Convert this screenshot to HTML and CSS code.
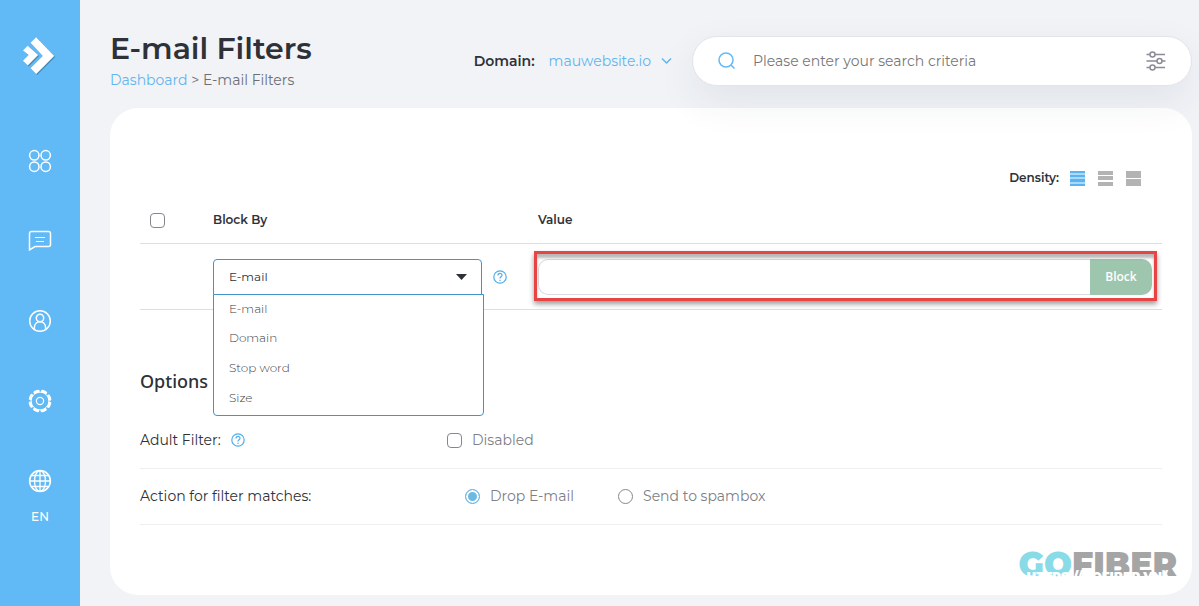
FILE: index.html
```html
<!DOCTYPE html>
<html lang="en">
<head>
<meta charset="utf-8">
<title>E-mail Filters</title>
<link rel="stylesheet" href="styles.css">
</head>
<body>
<nav class="sidebar" aria-label="Main">
  <a class="logo" href="#" aria-label="Home">
    <svg width="34" height="42" viewBox="0 0 36 42"><g class="logo-shade"><path d="M1 15l5-5 11 10-11 11-5-5 6-6z"/><path d="M9 7l6-6 19 20-19 19-6-6 13-13z"/></g><path d="M0 14l5-5 11 10L5 30l-5-5 6-6z" fill="#fff"/><path d="M8 6l6-6 19 20-19 19-6-6 13-13z" fill="#fff"/></svg>
  </a>
  <a class="nav-item" href="#" aria-label="Apps">
    <svg class="nav-icon" viewBox="0 0 24 24"><circle cx="6.3" cy="6.3" r="4.7"/><circle cx="17.7" cy="6.3" r="4.7"/><circle cx="6.3" cy="17.7" r="4.7"/><circle cx="17.7" cy="17.7" r="4.7"/></svg>
  </a>
  <a class="nav-item" href="#" aria-label="Messages">
    <svg class="nav-icon" viewBox="0 0 24 24"><path d="M3.500 2.500h17a2 2 0 0 1 2 2v11a2 2 0 0 1-2 2H7l-5.500 3.500V4.500a2 2 0 0 1 2-2z"/><path d="M7 8.500h10M8 12.500h8" stroke-width="1.200"/></svg>
  </a>
  <a class="nav-item" href="#" aria-label="Account">
    <svg class="nav-icon" viewBox="0 0 24 24"><circle cx="12" cy="12" r="10.300"/><circle cx="12" cy="9" r="3.700"/><path d="M6.300 20.500v-1.500c0-8.500 11.400-8.500 11.400 0v1.500"/></svg>
  </a>
  <a class="nav-item" href="#" aria-label="Settings">
    <svg class="nav-icon" viewBox="0 0 24 24"><circle cx="12" cy="12" r="10" stroke-width="3" stroke-linecap="round" stroke-dasharray="3.500 4.354" stroke-dashoffset="-2.200"/><circle cx="12" cy="12" r="8.900" stroke-width="1"/><circle cx="12" cy="12" r="3.600" stroke-width="1.200"/></svg>
  </a>
  <a class="nav-item nav-lang" href="#">
    <svg class="nav-icon" viewBox="0 0 24 24"><circle cx="12" cy="12" r="10.400"/><ellipse cx="12" cy="12" rx="5.500" ry="10.400" stroke-width="1.300"/><path d="M12 1.600v20.800M1.600 12h20.800M3.500 6.500h17M3.500 17.500h17" stroke-width="1.300"/></svg>
    <span>EN</span>
  </a>
</nav>

<main class="main">
  <header class="header">
    <div class="heading">
      <h1>E-mail Filters</h1>
      <div class="breadcrumb"><a href="#">Dashboard</a> &gt; E-mail Filters</div>
    </div>
    <div class="domain">
      <strong>Domain:</strong>
      <button type="button" class="domain-button">mauwebsite.io
        <svg width="11" height="8" viewBox="0 0 11 8"><path d="M1 1.500l4.500 4.500L10 1.500"/></svg>
      </button>
    </div>
    <form class="search">
      <svg width="18" height="18" viewBox="0 0 18 18" class="search-icon"><circle cx="8" cy="8" r="7"/><path d="M13 13l3.500 3.500"/></svg>
      <input type="text" aria-label="Search" placeholder="Please enter your search criteria">
      <button type="button" class="search-options" aria-label="Search options">
        <svg width="20" height="20" viewBox="0 0 20 20"><path d="M.5 3.500H4M9 3.500h10M.5 10h10.500M16 10h3.500M.5 16.500H4M9 16.500h10"/><circle cx="6.500" cy="3.500" r="2.500"/><circle cx="13.500" cy="10" r="2.500"/><circle cx="6.500" cy="16.500" r="2.500"/></svg>
      </button>
    </form>
  </header>

  <section class="card">
    <div class="density">
      <span>Density:</span>
      <button type="button" class="density-button" aria-label="Compact"><svg width="15" height="15" viewBox="0 0 15 15"><path fill="#a9dafb" d="M0 0h15v15H0z"/><path fill="#5db3f0" d="M0 0h15v2H0zM0 4h15v2H0zM0 8h15v3H0zM0 13h15v2H0z"/></svg></button>
      <button type="button" class="density-button" aria-label="Normal"><svg width="15" height="15" viewBox="0 0 15 15"><path fill="#b3b3b3" d="M0 0h15v4H0zM0 5h15v4H0zM0 11h15v4H0z"/></svg></button>
      <button type="button" class="density-button" aria-label="Relaxed"><svg width="15" height="15" viewBox="0 0 15 15"><path fill="#b3b3b3" d="M0 0h15v7H0zM0 8h15v7H0z"/></svg></button>
    </div>

    <table class="filters">
      <colgroup><col class="col-check"><col class="col-type"><col></colgroup>
      <thead>
        <tr>
          <th><input type="checkbox" class="tick tick-all" aria-label="Select all"></th>
          <th>Block By</th>
          <th>Value</th>
        </tr>
      </thead>
      <tbody>
        <tr>
          <td></td>
          <td>
            <div class="type-field">
              <div class="dropdown">
                <select class="select" aria-label="Block by">
                  <option>E-mail</option><option>Domain</option><option>Stop word</option><option>Size</option>
                </select>
                <svg class="caret" width="11" height="6" viewBox="0 0 11 6"><path d="M0 0h11L5.500 6z"/></svg>
                <ul class="menu">
                  <li>E-mail</li>
                  <li>Domain</li>
                  <li>Stop word</li>
                  <li>Size</li>
                </ul>
              </div>
              <svg class="help" viewBox="0 0 14 14"><circle cx="7" cy="7" r="6.200"/><path d="M5 5.500c0-2.700 4-2.700 4-.2C9 6.800 7 6.800 7 8.500M7 9.800v1.200"/></svg>
            </div>
          </td>
          <td>
            <div class="value-field">
              <input type="text" aria-label="Value">
              <button type="button">Block</button>
            </div>
          </td>
        </tr>
      </tbody>
    </table>

    <h2>Options</h2>
    <div class="option">
      <div class="option-name">Adult Filter:
        <svg class="help" viewBox="0 0 14 14"><circle cx="7" cy="7" r="6.200"/><path d="M5 5.500c0-2.700 4-2.700 4-.2C9 6.800 7 6.800 7 8.500M7 9.800v1.200"/></svg>
      </div>
      <label class="choice"><input type="checkbox" class="tick">Disabled</label>
    </div>
    <div class="option" role="radiogroup" aria-labelledby="action-name">
      <div class="option-name" id="action-name">Action for filter matches:</div>
      <div class="radios">
        <label class="choice"><input type="radio" class="tick radio" name="action" checked>Drop E-mail</label>
        <label class="choice"><input type="radio" class="tick radio" name="action">Send to spambox</label>
      </div>
    </div>

    <div class="watermark">
      <div class="brand"><span>GO</span>FIBER</div>
      <div class="brand-url">HTTPS://GOFIBER.VN/</div>
    </div>
  </section>
</main>
</body>
</html>
```
FILE: styles.css
```css
* { box-sizing: border-box; }

body {
  margin: 0;
  min-height: 100vh;
  display: flex;
  background: #f1f3f7;
  color: #2e3138;
  font: 14px/20px Montserrat, Inter, sans-serif;
}

button, input, select { font: inherit; color: inherit; }
button { border: 0; padding: 0; background: none; cursor: pointer; }
a { color: #62b5ee; text-decoration: none; }
svg { display: block; flex: none; }

/* Sidebar */
.sidebar {
  flex: 0 0 80px;
  display: flex;
  flex-direction: column;
  align-items: center;
  gap: 56px;
  padding-top: 36px;
  background: #61b9f5;
}
.logo { margin-bottom: 15px; }
.logo-shade { fill: #000; opacity: .25; }
.nav-item { color: #fff; }
.nav-icon { width: 24px; height: 24px; fill: none; stroke: #fff; stroke-width: 1.5; }
.nav-lang {
  display: flex;
  flex-direction: column;
  align-items: center;
  gap: 14px;
  font-size: 12px;
  font-weight: 500;
}

/* Header */
.main { flex: 1; min-width: 0; padding: 32px 7px 12px 30px; }
.header {
  position: relative;
  z-index: 1;
  display: flex;
  align-items: center;
  margin-bottom: 18px;
}
.heading { flex: 1; }
h1 { margin: 0 0 4px; font-size: 30px; line-height: 34px; font-weight: 600; }
.breadcrumb { color: #6b6e76; }
.domain { display: flex; gap: 14px; margin-right: 20px; }
.domain strong { font-weight: 600; }
.domain-button { display: flex; align-items: center; gap: 10px; color: #62b5ee; }
.domain-button svg { fill: none; stroke: #62b5ee; stroke-width: 1.5; }
.search {
  flex: 0 1 500px;
  display: flex;
  align-items: center;
  gap: 17px;
  height: 50px;
  padding: 0 25px;
  border: 1px solid #e2e4e9;
  border-radius: 25px;
  background: #fff;
  box-shadow: 0 15px 40px rgba(40, 50, 70, .08);
}
.search-icon { fill: none; stroke: #62b9f5; stroke-width: 1.5; }
.search input { flex: 1; min-width: 0; border: 0; padding: 0; outline: 0; background: none; }
.search input::placeholder { color: #777; opacity: 1; }
.search-options svg { fill: none; stroke: #8b8c95; stroke-width: 1.5; }

/* Card */
.card { padding: 60px 30px 12px; border-radius: 28px; background: #fff; }
.density {
  display: flex;
  align-items: center;
  justify-content: flex-end;
  gap: 13px;
  padding-right: 21px;
  font-size: 12px;
  font-weight: 600;
}
.density span { margin-right: -2px; }

.filters { width: 100%; table-layout: fixed; border-collapse: collapse; margin-top: 10px; }
.col-check { width: 73px; }
.col-type { width: 325px; }
.filters tr { border-bottom: 1px solid #dcdee0; }
.filters th { height: 45px; padding: 0; text-align: left; font-size: 12px; font-weight: 600; }
.filters td { padding: 15px 0 14px; }

.tick {
  appearance: none;
  width: 15px;
  height: 15px;
  margin: 0;
  border: 1px solid #85878e;
  border-radius: 4px;
  background: #fff;
}
.tick-all { display: block; margin-left: 10px; }
.radio { border-radius: 50%; }
.radio:checked {
  border-color: #62b5ee;
  background: #6cb9e2;
  box-shadow: inset 0 0 0 2px #fff;
}

.type-field { display: flex; align-items: center; gap: 11px; }
.dropdown { position: relative; width: 269px; }
.select {
  display: block;
  appearance: none;
  width: 100%;
  height: 36px;
  padding: 0 15px;
  border: 1px solid #3e97c8;
  border-radius: 4px 4px 0 0;
  background: #fff;
  outline: 0;
  font-size: 12px;
}
.caret { position: absolute; right: 15px; top: 15px; fill: #2e3138; pointer-events: none; }
.menu {
  position: absolute;
  z-index: 2;
  top: 35px;
  left: 0;
  width: 271px;
  margin: 0;
  padding: 0 0 2px;
  list-style: none;
  border: 1px solid #3e97c8;
  border-radius: 0 0 4px 4px;
  background: #fff;
  color: #3c3e43;
  font-size: 12px;
  font-weight: 300;
}
.menu li { padding: 0 15px; line-height: 30px; }
.menu li:first-child { line-height: 28px; }
.help { width: 14px; height: 14px; fill: none; stroke: #50aeea; stroke-width: 1.2; }

.value-field { position: relative; display: flex; height: 36px; margin-right: 10px; }
.value-field::after {
  content: "";
  position: absolute;
  inset: -8px -5px -6px -4px;
  border: 3px solid #e74444;
  box-shadow: 0 3px 5px rgba(0, 0, 0, .4), inset 0 4px 3px rgba(0, 0, 0, .28);
  pointer-events: none;
}
.value-field input {
  flex: 1;
  min-width: 0;
  border: 1px solid #d9dde3;
  border-right: 0;
  border-radius: 10px 0 0 10px;
  padding: 0 12px;
}
.value-field button {
  width: 62px;
  border-radius: 0 10px 10px 0;
  background: #9ec5ad;
  color: #fff;
  font: 600 12px "Open Sans", sans-serif;
}

h2 { margin: 59px 0 20px; font: 500 18px/24px "Noto Sans", sans-serif; }
.option {
  display: grid;
  grid-template-columns: 307px 1fr;
  align-items: center;
  height: 56px;
  border-bottom: 1px solid #eceef0;
}
.option-name, .choice { display: flex; align-items: center; gap: 10px; }
.choice { color: #7d8087; }
.radios { display: flex; gap: 44px; padding-left: 18px; }

.watermark { position: relative; width: max-content; margin: 20px -15px 0 auto; }
.brand { color: #a5a5a5; font-size: 33px; line-height: 38px; font-weight: 900; }
.brand span { color: #8adbe8; }
.brand-url {
  position: absolute;
  top: 22px;
  left: 8px;
  color: #fff;
  font-size: 12px;
  font-weight: 900;
}
```
